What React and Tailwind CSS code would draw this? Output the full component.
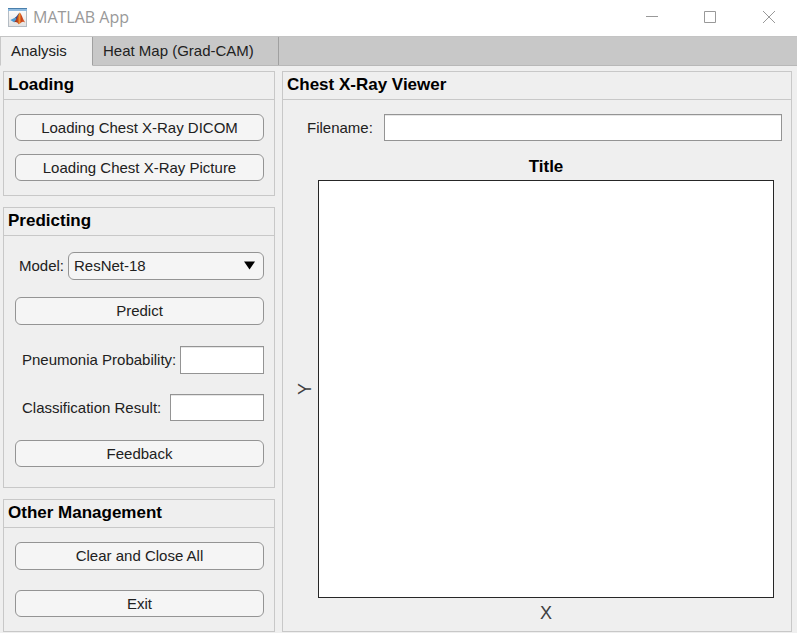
import { useId } from "react";

function Panel({ title, className = "", children }) {
  return (
    <section className={`flex flex-col border border-[#c8c8c8] ${className}`}>
      <h2 className="h-7 shrink-0 border-b border-[#c8c8c8] px-1 text-[17px] leading-[26px] font-bold text-black">{title}</h2>
      {children}
    </section>
  );
}

function PushButton({ children, className = "h-[27px]" }) {
  return (
    <button
      type="button"
      className={`w-full rounded-md border border-[#949494] bg-[#f5f5f5] text-center leading-5 text-[#212121] ${className}`}
    >
      {children}
    </button>
  );
}

function Field({ label, className, inputClass }) {
  const id = useId();
  return (
    <div className={`flex items-center ${className}`}>
      <label htmlFor={id} className="shrink-0 whitespace-nowrap">{label}</label>
      <input
        id={id}
        type="text"
        className={`min-w-0 border border-[#949494] bg-white px-1 shadow-[inset_0_1px_0_#e6e6e6] outline-none ${inputClass}`}
      />
    </div>
  );
}

function MatlabIcon() {
  return (
    <svg className="size-5" viewBox="0 0 20 20" aria-hidden="true">
      <defs>
        <linearGradient id="flame" x1="0" x2="1">
          <stop offset="0" stopColor="#8a2a1c" />
          <stop offset="0.3" stopColor="#b8401f" />
          <stop offset="0.5" stopColor="#f2962f" />
          <stop offset="0.65" stopColor="#c9421c" />
          <stop offset="1" stopColor="#d9622a" />
        </linearGradient>
        <linearGradient id="frame" x1="0" x2="0" y1="0" y2="1">
          <stop offset="0" stopColor="#ffffff" />
          <stop offset="1" stopColor="#e2e2e2" />
        </linearGradient>
      </defs>
      <rect x="0.5" y="0.5" width="18" height="18" fill="url(#frame)" stroke="#b4bcc4" />
      <rect x="0" y="0" width="19" height="1" fill="#4a7fab" />
      <rect x="0" y="1" width="19" height="2" fill="#8fbbe0" />
      <path d="M2.300 12 6.800 9.800l2.200 2.100L6 14.300z" fill="#4a9ad4" />
      <path d="M6.800 9.800c1.500-.3 2.900-3.200 4.800-5.200L10.300 11 8 13.500 6 14.300 9 11.900z" fill="#2b4f8e" />
      <path d="M6 14.300c2.300-1 3.600-7.300 5.800-9.700 1.900 1.500 2.900 6.600 5.400 9.900-1.900-1.300-3.200-.8-4.300.3-.8.800-1.400 1.400-2.400 1.500-.9-1.700-2.100-2.700-4.500-2z" fill="url(#flame)" />
    </svg>
  );
}

export default function App() {
  return (
    <div className="flex min-h-screen flex-col bg-[#efefef] font-['Liberation_Sans',Arial,sans-serif] text-[15px] leading-5 text-[#212121]">
      <header className="flex h-9 items-center bg-white pl-2">
        <MatlabIcon />
        <h1 className="ml-[5px] flex-1 pb-[2px] font-['Open_Sans','Segoe_UI',sans-serif] text-base font-normal text-[#999999]">MATLAB App</h1>
        <div className="flex text-[#999999]">
          <button type="button" aria-label="Minimize" className="flex h-9 w-[58px] items-center justify-center">
            <svg width="12" height="12" fill="none" stroke="currentColor"><path d="M0 4.500h12" /></svg>
          </button>
          <button type="button" aria-label="Maximize" className="flex h-9 w-[58px] items-center justify-center">
            <svg width="12" height="12" viewBox="0 1 12 12" fill="none" stroke="currentColor" overflow="visible"><path d="M.5.500h11v11H.5z" /></svg>
          </button>
          <button type="button" aria-label="Close" className="flex h-9 w-[58px] items-center justify-center">
            <svg width="12" height="12" viewBox="-1 1 12 12" fill="none" stroke="currentColor" overflow="visible"><path d="M0 0 12 12M12 0 0 12" /></svg>
          </button>
        </div>
      </header>

      <nav role="tablist" className="flex h-[30px] border-t border-b border-t-[#c4c4c4] border-b-[#b8b8b8] bg-[#c8c8c8]">
        <button type="button" role="tab" aria-selected="true" className="-mb-px w-[93px] border-x border-b border-l-[#c8c8c8] border-r-[#a0a0a0] border-b-[#efefef] bg-[#efefef] pl-[10px] text-left">
          Analysis
        </button>
        <button type="button" role="tab" aria-selected="false" className="w-[186px] border-r border-[#a0a0a0] pl-[10px] text-left">
          Heat Map (Grad-CAM)
        </button>
      </nav>

      <main className="flex flex-1 gap-[7px] pt-[5px] pr-[5px] pb-px pl-[3px]">
        <div className="flex w-[272px] shrink-0 flex-col gap-[11px]">
          <Panel title="Loading">
            <div className="flex flex-col gap-[13px] py-[14px] pr-[10px] pl-[11px]">
              <PushButton>Loading Chest X-Ray DICOM</PushButton>
              <PushButton>Loading Chest X-Ray Picture</PushButton>
            </div>
          </Panel>

          <Panel title="Predicting">
            <div className="flex flex-col pt-4 pr-[10px] pb-5 pl-[11px]">
              <div className="flex items-center justify-between pl-1">
                <label htmlFor="model">Model:</label>
                <div className="grid w-[196px] items-center">
                  <select
                    id="model"
                    className="col-start-1 row-start-1 h-7 w-full appearance-none rounded-md border border-[#949494] bg-[#f5f5f5] pl-[5px] outline-none"
                  >
                    <option>ResNet-18</option>
                  </select>
                  <svg className="pointer-events-none col-start-1 row-start-1 mr-[9px] justify-self-end" width="11" height="10" aria-hidden="true">
                    <path d="M0 .500h11l-5.500 8z" fill="#000" />
                  </svg>
                </div>
              </div>
              <PushButton className="mt-[17px] h-7">Predict</PushButton>
              <Field label="Pneumonia Probability:" className="mt-[21px] justify-between pl-[7px]" inputClass="h-7 w-[84px]" />
              <Field label="Classification Result:" className="mt-5 justify-between pl-[7px]" inputClass="h-[27px] w-[94px]" />
              <div className="mt-[19px] flex">
                <PushButton>Feedback</PushButton>
              </div>
            </div>
          </Panel>

          <Panel title="Other Management">
            <div className="flex flex-col gap-5 py-[14px] pr-[10px] pl-[11px]">
              <PushButton className="h-7">Clear and Close All</PushButton>
              <PushButton>Exit</PushButton>
            </div>
          </Panel>
        </div>

        <Panel title="Chest X-Ray Viewer" className="min-w-0 flex-1">
          <Field label="Filename:" className="mt-[14px] gap-[11px] pr-[9px] pl-6" inputClass="h-[27px] flex-1" />
          <figure className="mt-[15px] grid flex-1 grid-cols-[35px_1fr] grid-rows-[24px_1fr_33px] pr-[17px]">
            <figcaption className="col-start-2 text-center text-[17px] leading-[22px] font-bold text-black">Title</figcaption>
            <div className="col-start-1 row-start-2 flex items-center justify-center pl-2">
              <span className="rotate-180 text-lg leading-5 text-[#404040] [writing-mode:vertical-rl]">Y</span>
            </div>
            <div className="col-start-2 row-start-2 border border-[#262626] bg-white" />
            <div className="col-start-2 row-start-3 pt-[3px] text-center text-lg leading-6 text-[#404040]">X</div>
          </figure>
        </Panel>
      </main>
    </div>
  );
}
